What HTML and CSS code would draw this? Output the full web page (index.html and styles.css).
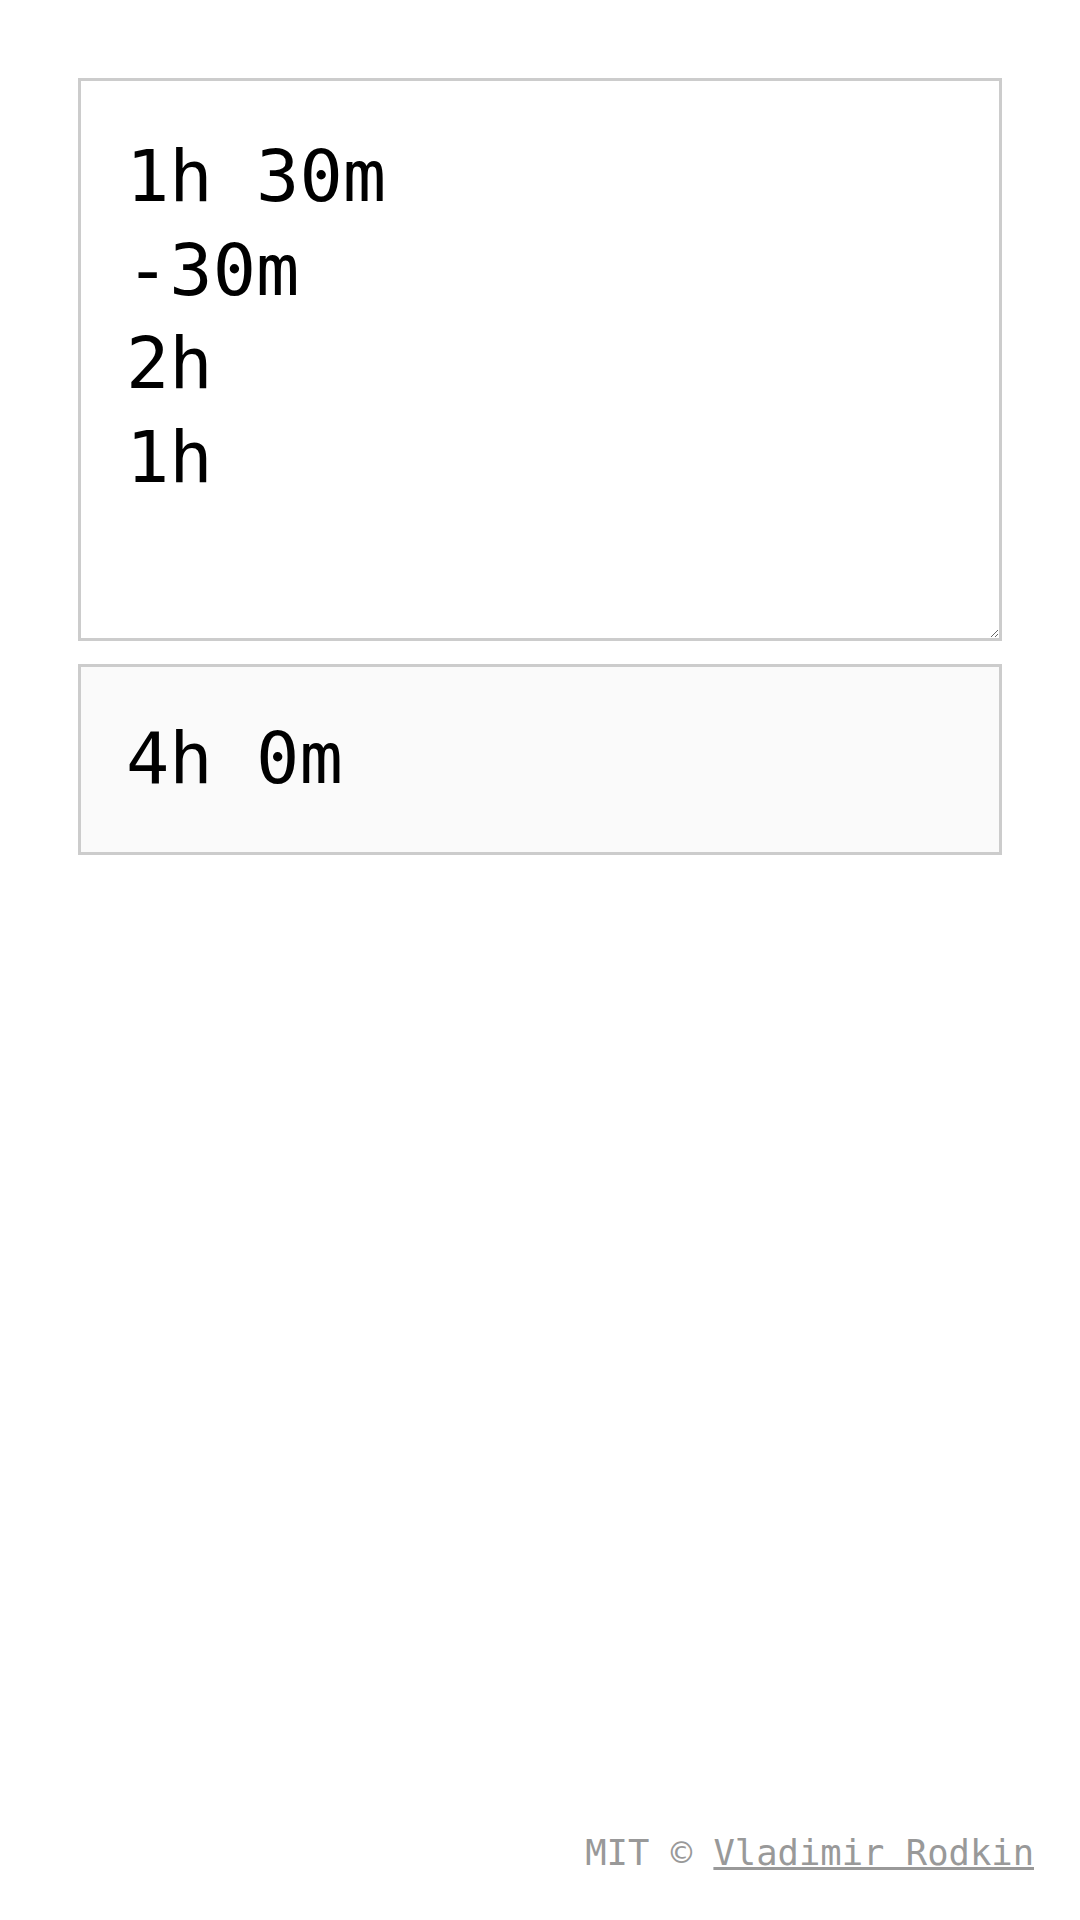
FILE: index.html
```html
<!DOCTYPE html>
<html>
<head>
<meta charset="utf-8">
<link rel="stylesheet" href="styles.css">
</head>
<body>
<div class="page">
  <main class="main">
    <textarea class="input" spellcheck="false">1h 30m
-30m
2h
1h</textarea>
    <div class="result">4h 0m</div>
  </main>
  <footer class="footer">MIT © <a class="link" href="#">Vladimir Rodkin</a></footer>
</div>
</body>
</html>
```

FILE: styles.css
```css
html, body {
  margin: 0;
  padding: 0;
  background: #fff;
}
.page {
  min-height: 1920px;
  display: flex;
  flex-direction: column;
  box-sizing: border-box;
  font-family: "DejaVu Sans Mono", monospace;
}
.main {
  padding: 78px 78px 0;
  display: flex;
  flex-direction: column;
  gap: 23px;
}
.input {
  display: block;
  box-sizing: border-box;
  width: 100%;
  height: 563px;
  margin: 0;
  padding: 49px 45px 45px;
  border: 3px solid #ccc;
  border-radius: 0;
  font-family: "DejaVu Sans Mono", monospace;
  font-size: 72px;
  line-height: 1.3;
  color: #000;
  background: #fff;
  outline: none;
}
.result {
  box-sizing: border-box;
  padding: 45px 45px 46px;
  border: 3px solid #ccc;
  background: #fafafa;
  font-size: 72px;
  line-height: 1.3;
  color: #000;
}
.footer {
  margin-top: auto;
  padding: 0 46px 44px 0;
  text-align: right;
  font-size: 35.5px;
  line-height: 1.3;
  color: #999;
}
.link {
  color: #999;
  text-decoration: underline;
}
```
